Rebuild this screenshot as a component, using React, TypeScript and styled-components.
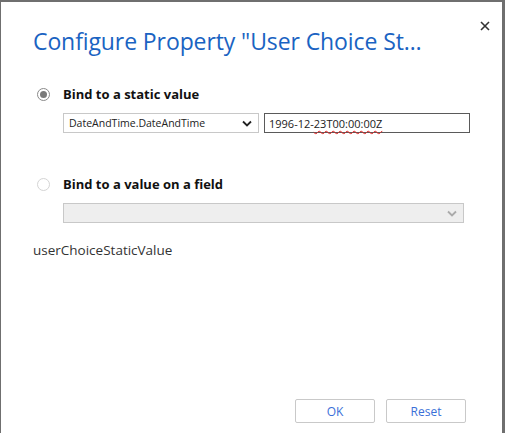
import React from "react";
import styled, { createGlobalStyle } from "styled-components";

const GlobalStyle = createGlobalStyle`
  html, body {
    margin: 0;
    padding: 0;
    height: 100%;
    background: #6f6f6f;
  }
  #root {
    height: 100%;
  }
`;

const Frame = styled.div`
  box-sizing: border-box;
  height: 433px;
  padding: 2px 3px 0 1px;
  background: #6f6f6f;
  display: flex;
`;

const Dialog = styled.div`
  flex: 1;
  background: #fff;
  display: flex;
  flex-direction: column;
  font-family: "Open Sans", "Noto Sans", sans-serif;
  color: #333;
`;

const Header = styled.div`
  display: flex;
  justify-content: space-between;
  align-items: flex-start;
  padding: 23px 9px 0 32px;
`;

const Title = styled.h1`
  margin: 0;
  font-size: 23px;
  font-weight: 400;
  color: #1a63c2;
  letter-spacing: -0.1px;
  white-space: nowrap;
`;

const CloseButton = styled.button`
  border: none;
  background: none;
  padding: 0;
  margin-top: -7px;
  width: 16px;
  height: 16px;
  display: flex;
  align-items: center;
  justify-content: center;
  cursor: pointer;
`;

const Body = styled.div`
  flex: 1;
  display: flex;
  flex-direction: column;
  padding: 28px 0 0 36px;
`;

const OptionRow = styled.label`
  display: flex;
  align-items: center;
  gap: 13px;
  font-size: 13px;
  font-weight: 700;
  color: #111;
`;

const Radio = styled.span<{ $checked?: boolean }>`
  box-sizing: border-box;
  width: 13px;
  height: 13px;
  border-radius: 50%;
  border: 1px solid ${(p) => (p.$checked ? "#8a8a8a" : "#d4d4d4")};
  background: #fff;
  display: flex;
  align-items: center;
  justify-content: center;
  &::after {
    content: "";
    width: 7px;
    height: 7px;
    border-radius: 50%;
    background: ${(p) => (p.$checked ? "#7a7a7a" : "transparent")};
  }
`;

const Controls = styled.div<{ $gap: number }>`
  display: flex;
  gap: 5px;
  margin: ${(p) => p.$gap}px 0 0 26px;
`;

const SelectBox = styled.div<{ $disabled?: boolean; $width: number }>`
  box-sizing: border-box;
  width: ${(p) => p.$width}px;
  height: 20px;
  border: 1px solid #c8c8c8;
  background: ${(p) => (p.$disabled ? "#eeeeee" : "#fff")};
  display: flex;
  align-items: center;
  justify-content: space-between;
  padding: 0 6px 0 5px;
  font-size: 10.5px;
  color: #222;
`;

const TextInput = styled.div`
  box-sizing: border-box;
  width: 206px;
  height: 20px;
  border: 1px solid #5a5a5a;
  display: flex;
  align-items: center;
  padding: 0 4px;
  font-size: 11px;
  color: #222;
`;

const Misspelled = styled.span`
  text-decoration: underline wavy #e02020;
  text-decoration-thickness: 1px;
  text-underline-offset: 2px;
`;

const SecondOption = styled.div`
  margin-top: 42px;
`;

const FieldName = styled.div`
  margin: 18px 0 0 -4px;
  font-size: 13.5px;
  color: #333;
`;

const Footer = styled.div`
  display: flex;
  justify-content: flex-end;
  gap: 11px;
  padding: 0 36px 10px 0;
`;

const Button = styled.button`
  box-sizing: border-box;
  width: 80px;
  height: 24px;
  border: 1px solid #c9c9c9;
  border-radius: 2px;
  background: #fff;
  color: #3a6fd8;
  font-family: "Open Sans", "Noto Sans", sans-serif;
  font-size: 12px;
  cursor: pointer;
`;

const Chevron = ({ color }: { color: string }) => (
  <svg width="10" height="7" viewBox="0 0 10 7">
    <path d="M1 1.5 L5 5.5 L9 1.5" fill="none" stroke={color} strokeWidth="1.8" />
  </svg>
);

export default function App() {
  return (
    <>
      <GlobalStyle />
      <Frame>
        <Dialog>
          <Header>
            <Title>Configure Property "User Choice St…</Title>
            <CloseButton aria-label="Close">
              <svg width="10" height="10" viewBox="0 0 10 10">
                <path d="M1 1 L9 9 M9 1 L1 9" stroke="#333" strokeWidth="1.6" />
              </svg>
            </CloseButton>
          </Header>
          <Body>
            <OptionRow>
              <Radio $checked />
              Bind to a static value
            </OptionRow>
            <Controls $gap={10}>
              <SelectBox $width={196}>
                DateAndTime.DateAndTime
                <Chevron color="#222" />
              </SelectBox>
              <TextInput>
                1996-12-<Misspelled>23T00:00:00Z</Misspelled>
              </TextInput>
            </Controls>
            <SecondOption>
              <OptionRow>
                <Radio />
                Bind to a value on a field
              </OptionRow>
              <Controls $gap={10}>
                <SelectBox $disabled $width={401}>
                  <span />
                  <Chevron color="#aaa" />
                </SelectBox>
              </Controls>
            </SecondOption>
            <FieldName>userChoiceStaticValue</FieldName>
          </Body>
          <Footer>
            <Button>OK</Button>
            <Button>Reset</Button>
          </Footer>
        </Dialog>
      </Frame>
    </>
  );
}
